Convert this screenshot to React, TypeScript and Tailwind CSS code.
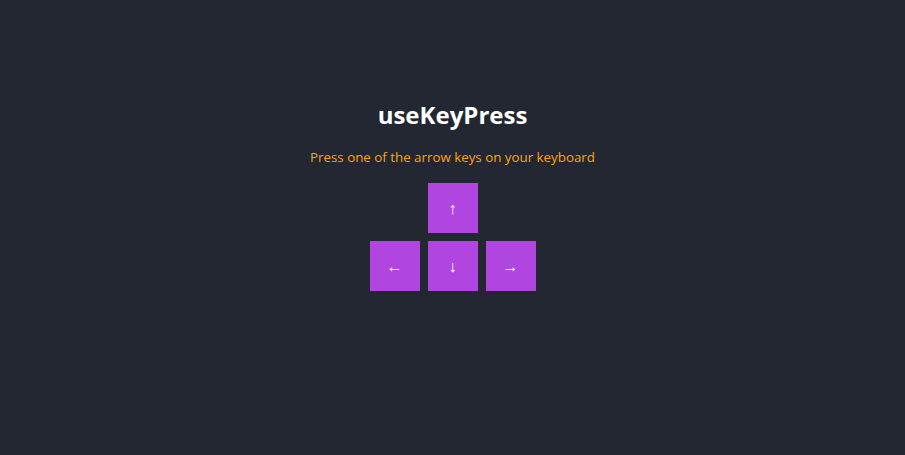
export default function App() {
  const key = "w-[50px] h-[50px] bg-[#b046df] flex items-center justify-center text-white text-base";
  return (
    <div className="min-h-[455px] w-full bg-[#222731] flex flex-col items-center pt-[99px]" style={{ fontFamily: '"Open Sans", sans-serif' }}>
      <h1 className="text-2xl leading-8 font-bold text-white">useKeyPress</h1>
      <p className="mt-4 text-[13.33px] leading-5 text-[#ffa500]">Press one of the arrow keys on your keyboard</p>
      <div className="mt-4 flex flex-col items-center gap-2">
        <div className={key}>↑</div>
        <div className="flex gap-2">
          <div className={key}>←</div>
          <div className={key}>↓</div>
          <div className={key}>→</div>
        </div>
      </div>
    </div>
  );
}
